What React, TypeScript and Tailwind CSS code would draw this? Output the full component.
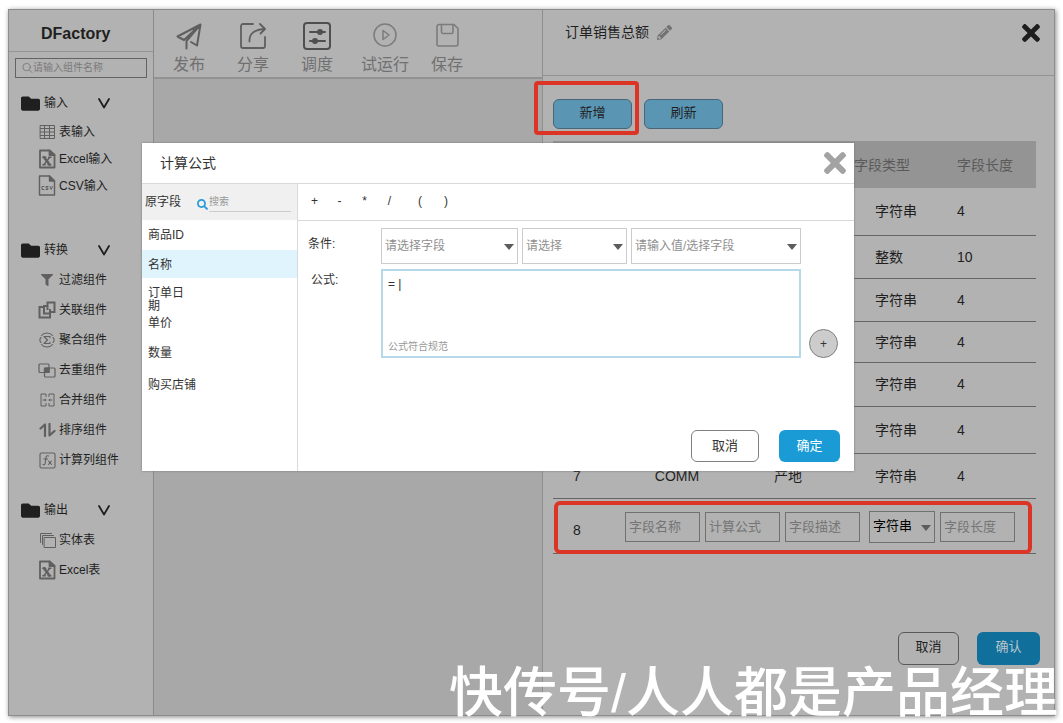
import React from 'react';
import { FaFolder, FaFilter, FaPencilAlt, FaTimes, FaSearch } from 'react-icons/fa';

interface TreeItem {
  label: string;
  icon: React.ReactNode;
}

interface TreeGroup {
  title: string;
  spacing: string;
  row: string;
  items: TreeItem[];
}

interface FieldRow {
  no: string;
  name: string;
  desc: string;
  type: string;
  length: string;
  height: string;
}

const svgProps = {
  fill: 'none',
  stroke: 'currentColor',
  strokeLinecap: 'round' as const,
  strokeLinejoin: 'round' as const,
};

// Sidebar icons
const GridIcon = () => (
  <svg width="17" height="16" viewBox="0 0 17 16" {...svgProps} strokeWidth="1">
    <path d="M1.5 1.5h14v13h-14zM1.5 4.5h14M1.5 8h14M1.5 11.5h14M5.5 1.5v13M10.5 1.5v13" />
  </svg>
);

const ExcelIcon = () => (
  <svg width="18" height="20" viewBox="0 0 18 20" {...svgProps} strokeWidth="1.8">
    <path d="M2 1.5h9.5L16.5 6v12.5H2z" />
    <path d="M11.5 1.5V6h5z" fill="currentColor" />
    <path d="M6 8.2l5.5 7.3" strokeWidth="2.6" />
    <path d="M11.8 8.2L6 15.5M4.8 8.2h3M10.5 8.2H13M4.8 15.7h2.5M10 15.7h3" strokeWidth="1.4" />
  </svg>
);

const CsvIcon = () => (
  <svg width="18" height="21" viewBox="0 0 18 21" {...svgProps} strokeWidth="1.4">
    <path d="M1.5 1h10l5 5v14h-15z" />
    <path d="M11.5 1v5h5z" fill="currentColor" />
    <path d="M6 11.5H4v3h2M10 11.5H8V13h2v1.5H8M12 11.5l1.2 3 1.2-3" strokeWidth="1" />
  </svg>
);

const JoinIcon = () => (
  <svg width="18" height="18" viewBox="0 0 18 18" {...svgProps} strokeWidth="2" strokeLinecap="butt" strokeLinejoin="miter">
    <path d="M5 6H1.5v10.5H12V13" />
    <path d="M9.5 5H6v7.500h6V8" />
    <path d="M9.500 9V1.500h7v9.500H12" />
  </svg>
);

const SumIcon = () => (
  <svg width="16" height="16" viewBox="0 0 16 16" {...svgProps} strokeWidth="1.1">
    <path d="M2.5 3.500C5 .2 11 .2 13.500 3.500M2.500 12.500c2.500 3.300 8.500 3.300 11 0M2 5.500C.5 6.500.5 9.500 2 10.500M14 5.500c1.500 1 1.500 4 0 5" />
    <path d="M11 5.800V4.500H5L8.500 8 5 11.500h6v-1.300" />
  </svg>
);

const DedupeIcon = () => (
  <svg width="18" height="15" viewBox="0 0 18 15" {...svgProps} strokeWidth="1.2">
    <rect x="1" y="1" width="10" height="8.5" rx="1" />
    <rect x="6.5" y="5" width="10.5" height="9" rx="1" />
    <path d="M6.5 5H11v4.500H6.500z" fill="currentColor" />
  </svg>
);

const MergeIcon = () => (
  <svg width="15" height="14" viewBox="0 0 15 14" {...svgProps} strokeWidth="1">
    <path d="M6 3.500V1H1v12h5v-2.500M9 3.500V1h5v12H9v-2.500M3 7h3M9 7h3M5 6l1 1-1 1M10 6L9 7l1 1" />
  </svg>
);

const SortIcon = () => (
  <svg width="17" height="14" viewBox="0 0 17 14" {...svgProps} strokeWidth="2.2">
    <path d="M1.5 5.500L6 1.500V13M10.500 1v11.500l5-4.500" />
  </svg>
);

const FormulaIcon = () => (
  <svg width="17" height="17" viewBox="0 0 17 17" {...svgProps} strokeWidth="1.1">
    <rect x="1" y="1" width="15" height="15" rx="1.5" />
    <path d="M9.500 4c-1.500-.8-2.300 0-2.500 1.500L6.200 11c-.2 1.500-1 2-2.200 1.500M4.800 7h3.700M9.500 9l3 3.500M12.500 9l-3 3.500" />
  </svg>
);

const EntityIcon = () => (
  <svg width="17" height="16" viewBox="0 0 17 16" {...svgProps} strokeWidth="1">
    <path d="M1.5 10.500v-9h11M3.500 12.500v-9h11" />
    <rect x="5.5" y="5.5" width="11" height="10" />
  </svg>
);

const ChevronIcon = () => (
  <svg width="12" height="11" viewBox="0 0 12 11" {...svgProps} strokeWidth="1.8">
    <path d="M1 1l5 8.500L11 1" />
  </svg>
);

// Drop-down arrow laid over the right end of a select
const SelectArrow = () => (
  <svg
    width="10"
    height="6"
    viewBox="0 0 10 6"
    fill="currentColor"
    className="pointer-events-none absolute top-1/2 right-1 -mt-0.5 text-[#5c5c5c]"
  >
    <path d="M0 0h10L5 6z" />
  </svg>
);

const groups: TreeGroup[] = [
  {
    title: '输入',
    spacing: 'mt-2.5',
    row: 'h-[27px]',
    items: [
      { label: '表输入', icon: <GridIcon /> },
      { label: 'Excel输入', icon: <ExcelIcon /> },
      { label: 'CSV输入', icon: <CsvIcon /> },
    ],
  },
  {
    title: '转换',
    spacing: 'mt-9',
    row: 'h-[30px]',
    items: [
      { label: '过滤组件', icon: <FaFilter size={12} /> },
      { label: '关联组件', icon: <JoinIcon /> },
      { label: '聚合组件', icon: <SumIcon /> },
      { label: '去重组件', icon: <DedupeIcon /> },
      { label: '合并组件', icon: <MergeIcon /> },
      { label: '排序组件', icon: <SortIcon /> },
      { label: '计算列组件', icon: <FormulaIcon /> },
    ],
  },
  {
    title: '输出',
    spacing: 'mt-5',
    row: 'h-[30px]',
    items: [
      { label: '实体表', icon: <EntityIcon /> },
      { label: 'Excel表', icon: <ExcelIcon /> },
    ],
  },
];

const tools = [
  {
    label: '发布',
    width: 'w-16',
    tone: 'text-[#5f5f5f]',
    icon: (
      <svg width="26" height="27" viewBox="0 0 26 27" {...svgProps} strokeWidth="2">
        <path d="M24.500 1.500L1.500 13.500l6.500 3.500L24.500 1.500l-3.500 21-6-3.500M10.500 25.500V18L24.500 1.500" />
      </svg>
    ),
  },
  {
    label: '分享',
    width: 'w-16',
    tone: 'text-[#5f5f5f]',
    icon: (
      <svg width="28" height="28" viewBox="0 0 28 28" {...svgProps} strokeWidth="1.8">
        <path d="M14 2H4a2 2 0 00-2 2v20a2 2 0 002 2h20a2 2 0 002-2V15" />
        <path d="M10.500 19.500C10 12 15 7.500 25.500 7M21 2l5 5-4.500 4.500" />
      </svg>
    ),
  },
  {
    label: '调度',
    width: 'w-16',
    tone: 'text-[#4f4f4f]',
    icon: (
      <svg width="28" height="28" viewBox="0 0 28 28" {...svgProps} strokeWidth="2">
        <rect x="1" y="1" width="26" height="26" rx="3" />
        <path d="M7 10h15M7 19h15" />
        <circle cx="17" cy="10" r="2" fill="currentColor" />
        <circle cx="12" cy="19" r="2" fill="currentColor" />
      </svg>
    ),
  },
  {
    label: '试运行',
    width: 'w-[72px]',
    tone: 'text-[#7c7c7c]',
    icon: (
      <svg width="24" height="26" viewBox="0 0 24 26" {...svgProps} strokeWidth="1.5">
        <circle cx="12" cy="12" r="11" />
        <path d="M10 7.500v9l6-4.500z" />
      </svg>
    ),
  },
  {
    label: '保存',
    width: 'w-[52px]',
    tone: 'text-[#7c7c7c]',
    icon: (
      <svg width="24" height="26" viewBox="0 0 24 26" {...svgProps} strokeWidth="1.6">
        <path d="M4 1.500h15l4 4V21a2 2 0 01-2 2H4a2 2 0 01-2-2V3.500a2 2 0 012-2z" />
        <path d="M6.500 1.500V9A1.500 1.500 0 008 10.500h8.500A1.500 1.500 0 0018 9V1.500" />
      </svg>
    ),
  },
];

const fieldRows: FieldRow[] = [
  { no: '', name: '', desc: '', type: '字符串', length: '4', height: 'h-[47px]' },
  { no: '', name: '', desc: '', type: '整数', length: '10', height: 'h-[43px]' },
  { no: '', name: '', desc: '', type: '字符串', length: '4', height: 'h-[43px]' },
  { no: '', name: '', desc: '', type: '字符串', length: '4', height: 'h-[41px]' },
  { no: '', name: '', desc: '', type: '字符串', length: '4', height: 'h-[44px]' },
  { no: '', name: '', desc: '', type: '字符串', length: '4', height: 'h-[47px]' },
  { no: '7', name: 'COMM', desc: '产地', type: '字符串', length: '4', height: 'h-[45px]' },
];

const sourceFields = [
  { label: '商品ID', row: 'h-[30px]' },
  { label: '名称', row: 'h-7 bg-[#e0f4fd]' },
  { label: '订单日期', row: 'h-[30px] w-[46px]' },
  { label: '单价', row: 'h-[30px]' },
  { label: '数量', row: 'h-8' },
  { label: '购买店铺', row: 'h-[30px]' },
];

const conditions = [
  { text: '请选择字段', width: 'w-[137px]' },
  { text: '请选择', width: 'w-[105px]' },
  { text: '请输入值/选择字段', width: 'w-[170px]' },
];

function Sidebar() {
  return (
    <aside className="w-[145px] shrink-0 border-r border-[#8a8a8a] bg-[#b2b2b2] text-xs text-[#1f1f1f]">
      <h1 className="h-[42px] border-b border-[#949494] pt-3 pl-8 text-base leading-6 font-bold">DFactory</h1>
      <label className="mx-1.5 mt-1.5 flex h-5 items-center border border-[#636363] pl-1.5 text-[#7a7a7a]">
        <svg width="12" height="12" viewBox="0 0 12 12" {...svgProps} strokeWidth="1">
          <circle cx="5" cy="5" r="4" />
          <path d="M8 8l3 3" />
        </svg>
        <input
          aria-label="请输入组件名称"
          placeholder="请输入组件名称"
          className="w-full min-w-0 bg-transparent text-[10px] outline-none placeholder:text-[#7a7a7a]"
        />
      </label>
      <nav>
        {groups.map((group) => (
          <section key={group.title} className={group.spacing}>
            <button type="button" className="flex h-[30px] w-full items-center pl-3">
              <FaFolder size={19} />
              <span className="ml-1 w-[54px] text-left">{group.title}</span>
              <ChevronIcon />
            </button>
            <ul>
              {group.items.map((item) => (
                <li key={item.label} className={`flex items-center gap-0.5 pl-7 ${group.row}`}>
                  <span className="flex w-5 justify-center text-[#606060]">{item.icon}</span>
                  <span className="whitespace-nowrap">{item.label}</span>
                </li>
              ))}
            </ul>
          </section>
        ))}
      </nav>
    </aside>
  );
}

function Toolbar() {
  return (
    <main className="min-w-0 flex-1 bg-[#a8a8a8]">
      <div className="flex h-[69px] border-b-2 border-[#929292] bg-[#b2b2b2] pt-3 pl-[3px]">
        {tools.map((tool) => (
          <button key={tool.label} type="button" className={`flex flex-col items-center gap-[5px] ${tool.width}`}>
            <span className={`flex h-7 items-center ${tool.tone}`}>{tool.icon}</span>
            <span className="text-base leading-5 text-[#707070]">{tool.label}</span>
          </button>
        ))}
      </div>
    </main>
  );
}

function DraftInput({ label }: { label: string }) {
  return (
    <input
      aria-label={label}
      placeholder={label}
      className="h-[30px] w-[75px] border border-[#707070] bg-transparent px-[3px] text-[13px] outline-none placeholder:text-[#757575]"
    />
  );
}

function Drawer() {
  return (
    <section className="flex w-[512px] shrink-0 flex-col border-l border-[#8f8f8f] bg-[#b2b2b2] text-sm text-[#1f1f1f]">
      <header className="flex h-[66px] items-start justify-between border-b border-[#929292] pt-2.5 pr-2.5 pl-[22px]">
        <h2 className="flex h-6 items-center gap-2">
          订单销售总额
          <FaPencilAlt size={15} className="text-[#737373]" />
        </h2>
        <button type="button" aria-label="关闭">
          <FaTimes size={26} />
        </button>
      </header>

      <div className="flex gap-3 pt-[23px] pl-2.5 text-[13px]">
        <div className="relative">
          <button type="button" className="h-[30px] w-[79px] rounded-md border border-[#47667a] bg-[#5a96b4] pb-0.5">
            新增
          </button>
          <div className="pointer-events-none absolute -top-[18px] -right-[7px] -bottom-[6px] -left-[19px] rounded border-4 border-[#dc3526]" />
        </div>
        <button type="button" className="h-[30px] w-[79px] rounded-md border border-[#47667a] bg-[#5a96b4] pb-0.5">
          刷新
        </button>
      </div>

      <div className="relative mt-3 mr-[18px] ml-2.5">
        <table className="w-full table-fixed">
          <colgroup>
            <col className="w-12" />
            <col className="w-[152px]" />
            <col className="w-[70px]" />
            <col className="w-[134px]" />
            <col />
          </colgroup>
          <thead>
            <tr className="h-[47px] bg-[#949494] text-left text-[#5a5a5a]">
              <td />
              <td />
              <td />
              <th className="pl-[31px] font-normal">字段类型</th>
              <th className="font-normal">字段长度</th>
            </tr>
          </thead>
          <tbody>
            {fieldRows.map((row, index) => (
              <tr key={index} className={`border-b border-[#666] ${row.height}`}>
                <td className="text-center">{row.no}</td>
                <td className="text-center">{row.name}</td>
                <td className="text-center">{row.desc}</td>
                <td className="pl-[52px]">{row.type}</td>
                <td>{row.length}</td>
              </tr>
            ))}
            <tr className="h-[55px] border-b border-[#666]">
              <td className="pt-2 text-center">8</td>
              <td colSpan={4} className="pt-0.5 pl-6">
                <div className="flex items-center gap-[5px]">
                  <DraftInput label="字段名称" />
                  <DraftInput label="计算公式" />
                  <DraftInput label="字段描述" />
                  <div className="relative ml-1">
                    <select
                      aria-label="字段类型"
                      className="block h-8 w-[66px] appearance-none border border-[#707070] bg-transparent px-[3px] text-[13px] text-black"
                    >
                      <option>字符串</option>
                    </select>
                    <SelectArrow />
                  </div>
                  <DraftInput label="字段长度" />
                </div>
              </td>
            </tr>
          </tbody>
        </table>
        <div className="pointer-events-none absolute right-1 bottom-0 left-px h-[53px] rounded-md border-4 border-[#dc3526]" />
      </div>

      <footer className="mt-auto flex justify-end gap-[18px] pr-3.5 pb-[50px] text-[13px]">
        <button type="button" className="h-[33px] w-[61px] rounded-md border border-[#595959] pb-0.5">
          取消
        </button>
        <button type="button" className="h-[33px] w-[63px] rounded-md bg-[#106f9b] pb-0.5 text-[#b9c6cc]">
          确认
        </button>
      </footer>
    </section>
  );
}

function FormulaDialog() {
  return (
    <div
      role="dialog"
      aria-labelledby="formula-title"
      className="absolute top-[133px] left-[133px] flex h-[328px] w-[712px] flex-col bg-white text-xs text-[#333] shadow-[0_0_2px_#777]"
    >
      <header className="flex h-[41px] items-center justify-between border-b border-[#d9d9d9] pr-2 pl-[18px]">
        <h2 id="formula-title" className="text-sm">
          计算公式
        </h2>
        <button type="button" aria-label="关闭" className="text-[#a3a3a3]">
          <FaTimes size={32} className="-mr-[5px]" />
        </button>
      </header>

      <div className="flex flex-1">
        <div className="w-[156px] shrink-0 border-r border-[#d9d9d9]">
          <div className="flex h-9 items-center bg-[#f0f0f0] pr-1.5 pl-[3px]">
            <span className="w-[52px] shrink-0">原字段</span>
            <FaSearch size={11} className="mt-1 shrink-0 text-[#2a9bd8]" />
            <input
              aria-label="搜索"
              placeholder="搜索"
              className="ml-px h-5 w-full min-w-0 border-b border-[#ccc] bg-transparent text-[10px] outline-none placeholder:text-[#999]"
            />
          </div>
          <ul>
            {sourceFields.map((field) => (
              <li key={field.label} className={`pt-[9px] pl-1.5 leading-[13px] ${field.row}`}>
                {field.label}
              </li>
            ))}
          </ul>
        </div>

        <div className="flex min-w-0 flex-1 flex-col">
          <div className="flex h-[37px] items-center gap-[5px] border-b border-[#d9d9d9] pb-0.5 pl-1">
            <div className="flex">
              {['+', '-', '*', '/'].map((op) => (
                <button key={op} type="button" className="w-[25px]">
                  {op}
                </button>
              ))}
            </div>
            <div className="flex">
              {['(', ')'].map((op) => (
                <button key={op} type="button" className="w-[26px]">
                  {op}
                </button>
              ))}
            </div>
          </div>

          <div className="flex pt-[7px] pl-2.5">
            <span className="w-[73px] shrink-0 pt-2">条件:</span>
            <div className="flex gap-1">
              {conditions.map((condition) => (
                <div key={condition.text} className="relative">
                  <select
                    aria-label={condition.text}
                    className={`block h-9 appearance-none border border-[#ccc] bg-white px-[3px] text-[#8f8f8f] ${condition.width}`}
                  >
                    <option>{condition.text}</option>
                  </select>
                  <SelectArrow />
                </div>
              ))}
            </div>
          </div>

          <div className="flex items-end pt-[5px] pl-2.5">
            <label htmlFor="formula" className="w-[73px] shrink-0 self-start pt-[3px] pl-[3px]">
              公式:
            </label>
            <div className="relative">
              <textarea
                id="formula"
                defaultValue="= |"
                className="block h-[89px] w-[420px] resize-none border-2 border-[#b5d9e8] px-[5px] py-[5px] leading-4 outline-none"
              />
              <span className="pointer-events-none absolute bottom-1 left-[7px] text-[10px] leading-[14px] text-[#999]">
                公式符合规范
              </span>
            </div>
            <button
              type="button"
              aria-label="添加"
              className="ml-2 size-[29px] rounded-full border border-[#808080] bg-[#ccc]"
            >
              +
            </button>
          </div>

          <footer className="mt-auto flex justify-end gap-5 pr-3.5 pb-[9px] text-[13px]">
            <button type="button" className="h-8 w-[68px] rounded-md border border-[#808080]">
              取消
            </button>
            <button type="button" className="h-8 w-[61px] rounded-md bg-[#1a9bd5] text-white">
              确定
            </button>
          </footer>
        </div>
      </div>
    </div>
  );
}

export default function App() {
  return (
    <div className="flex min-h-screen bg-white px-2 pt-[9px] pb-[7px] font-['Liberation_Sans','Noto_Sans_CJK_SC',sans-serif]">
      <div className="relative flex flex-1 border border-[#8c8c8c] shadow-[1px_1px_5px_#888]">
        <Sidebar />
        <Toolbar />
        <Drawer />
        <FormulaDialog />
        <p className="pointer-events-none absolute -right-1 -bottom-2 text-[54px] leading-[60px] font-medium whitespace-nowrap text-white">
          快传号/人人都是产品经理
        </p>
      </div>
    </div>
  );
}
